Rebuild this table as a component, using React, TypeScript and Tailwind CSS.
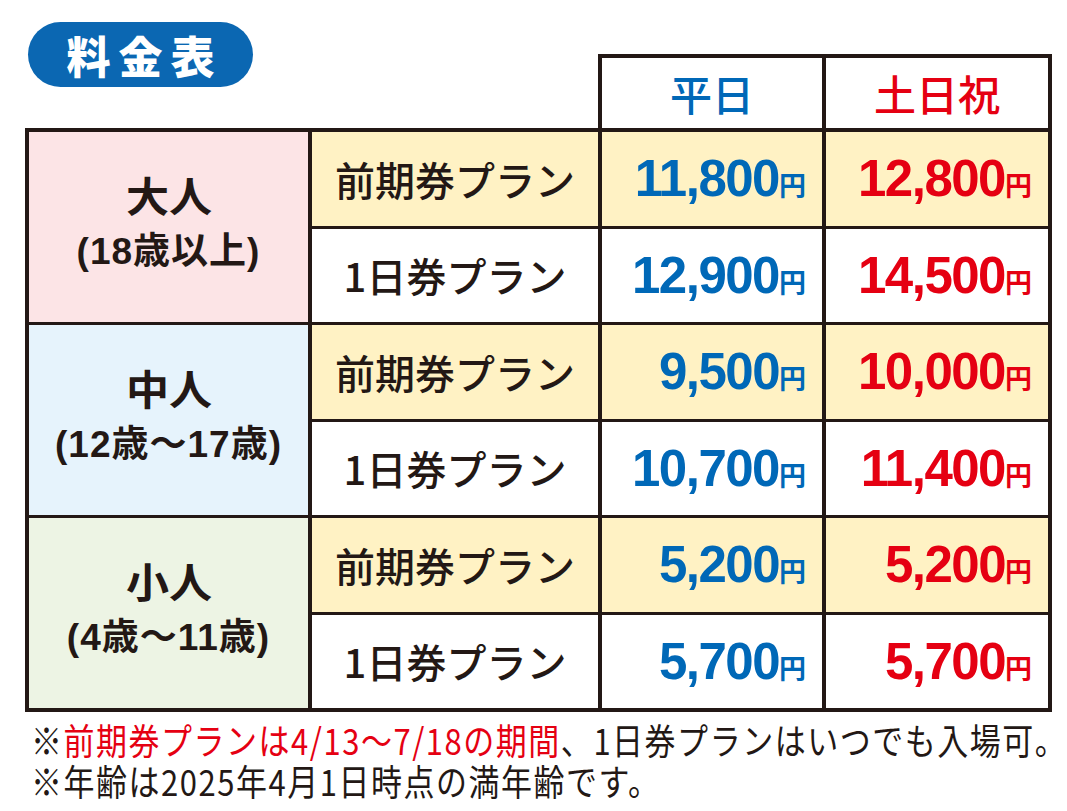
import React from 'react';

const CJK = "font-['Noto_Sans_CJK_JP',sans-serif]";

type Row = { plan: string; wd: string; we: string; yellow: boolean };

const groups: { label: string; sub: string; bg: string; rows: Row[] }[] = [
  {
    label: '大人',
    sub: '(18歳以上)',
    bg: 'bg-[#fce4e6]',
    rows: [
      { plan: '前期券プラン', wd: '11,800', we: '12,800', yellow: true },
      { plan: '1日券プラン', wd: '12,900', we: '14,500', yellow: false },
    ],
  },
  {
    label: '中人',
    sub: '(12歳～17歳)',
    bg: 'bg-[#e6f3fc]',
    rows: [
      { plan: '前期券プラン', wd: '9,500', we: '10,000', yellow: true },
      { plan: '1日券プラン', wd: '10,700', we: '11,400', yellow: false },
    ],
  },
  {
    label: '小人',
    sub: '(4歳～11歳)',
    bg: 'bg-[#edf4e4]',
    rows: [
      { plan: '前期券プラン', wd: '5,200', we: '5,200', yellow: true },
      { plan: '1日券プラン', wd: '5,700', we: '5,700', yellow: false },
    ],
  },
];

function Price({ v, red, yellow }: { v: string; red: boolean; yellow: boolean }) {
  return (
    <div
      className={
        'flex items-center justify-end pr-[16px] ' +
        (yellow ? 'bg-[#fff2c4] ' : 'bg-white ') +
        (red ? 'text-[#e50012]' : 'text-[#0068b7]')
      }
    >
      <div className="flex items-baseline">
        <span className="font-['Liberation_Sans',sans-serif] font-bold text-[51px] tracking-[-1.5px] leading-none">
          {v}
        </span>
        <span className={CJK + ' font-bold text-[27px] leading-none'}>円</span>
      </div>
    </div>
  );
}

export default function App() {
  return (
    <div className="w-[1067px] h-[811px] bg-white overflow-hidden">
      <div className="ml-[25px] w-[1027px] pt-[22px]">
        {/* top row: badge + header */}
        <div className="flex items-start h-[106px]">
          <div
            className={
              CJK +
              ' ml-[3px] w-[225px] h-[65px] rounded-full bg-[#0b67b2] flex items-center justify-center gap-[8px] text-white font-black text-[44px] leading-none'
            }
          >
            <span>料</span>
            <span>金</span>
            <span>表</span>
          </div>
          <div className="ml-auto mt-[32px] w-[454px] h-[74px] bg-[#231815] px-[4px] pt-[4px] grid grid-cols-[220px_1fr] gap-x-[4px]">
            <div className={CJK + ' bg-white flex items-center justify-center text-[#0068b7] text-[42px] font-medium leading-none'}>
              平日
            </div>
            <div className={CJK + ' bg-white flex items-center justify-center text-[#e50012] text-[42px] font-medium leading-none'}>
              土日祝
            </div>
          </div>
        </div>

        {/* table */}
        <div className="grid grid-cols-[279px_286px_220px_1fr] grid-rows-[repeat(6,1fr)] gap-x-[4px] gap-y-[3px] bg-[#231815] p-[4px] h-[584px]">
          {groups.map((g) => (
            <React.Fragment key={g.label}>
              <div className={'row-span-2 flex flex-col items-center justify-center pb-[8px] text-[#231815] ' + g.bg}>
                <div className={CJK + ' mb-[18px] font-bold text-[41px] leading-[40px] scale-x-[1.05]'}>{g.label}</div>
                <div className="font-['Liberation_Sans','Noto_Sans_CJK_JP',sans-serif] font-bold text-[37px] tracking-[1px] leading-[40px]">
                  {g.sub}
                </div>
              </div>
              {g.rows.map((r, i) => (
                <React.Fragment key={i}>
                  <div
                    className={
                      CJK +
                      ' flex items-center justify-center text-[#231815] text-[40px] font-medium leading-none ' +
                      (r.yellow ? 'bg-[#fff2c4]' : 'bg-white')
                    }
                  >
                    {r.plan}
                  </div>
                  <Price v={r.wd} red={false} yellow={r.yellow} />
                  <Price v={r.we} red={true} yellow={r.yellow} />
                </React.Fragment>
              ))}
            </React.Fragment>
          ))}
        </div>

        {/* footer */}
        <div
          className={
            CJK +
            ' mt-[7px] ml-[6px] w-max origin-left scale-x-[0.86] text-[36px] tracking-[1.8px] leading-[41px] text-[#231815]'
          }
        >
          <div className="whitespace-nowrap">
            ※<span className="text-[#e50012]">前期券プランは4/13～7/18の期間</span>、1日券プランはいつでも入場可。
          </div>
          <div className="whitespace-nowrap">※年齢は2025年4月1日時点の満年齢です。</div>
        </div>
      </div>
    </div>
  );
}
